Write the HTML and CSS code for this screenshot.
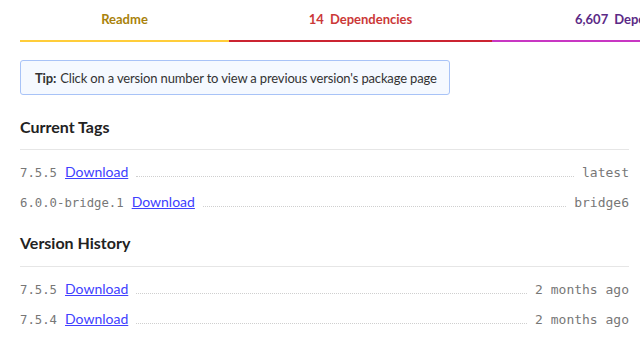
FILE: index.html
```html
<!DOCTYPE html>
<html>
<head>
<meta charset="utf-8">
<link rel="stylesheet" href="styles.css">
</head>
<body>
<div class="page">
  <nav class="tabs">
    <div class="tab tab-readme">Readme</div>
    <div class="tab tab-deps"><span class="num">14</span>Dependencies</div>
    <div class="tab tab-dependents"><span class="num">6,607</span>Dependents</div>
  </nav>
  <div class="tip"><strong>Tip:</strong> Click on a version number to view a previous version's package page</div>

  <h3 class="heading heading-first">Current Tags</h3>
  <ul class="list">
    <li class="row"><span class="ver">7.5.5</span><a class="dl" href="#">Download</a><span class="leader"></span><span class="tag">latest</span></li>
    <li class="row"><span class="ver">6.0.0-bridge.1</span><a class="dl" href="#">Download</a><span class="leader"></span><span class="tag">bridge6</span></li>
  </ul>

  <h3 class="heading heading-second">Version History</h3>
  <ul class="list">
    <li class="row"><span class="ver">7.5.5</span><a class="dl" href="#">Download</a><span class="leader"></span><span class="tag">2 months ago</span></li>
    <li class="row"><span class="ver">7.5.4</span><a class="dl" href="#">Download</a><span class="leader"></span><span class="tag">2 months ago</span></li>
  </ul>
</div>
</body>
</html>
```
FILE: styles.css
```css
html, body {
  margin: 0;
  padding: 0;
  overflow: hidden;
  background: #fff;
}
body {
  font-family: Lato, "Liberation Sans", sans-serif;
  color: #333;
}
.page {
  padding-left: 20px;
  width: 609px;
}
.tabs {
  display: flex;
  width: 800px;
  height: 40px;
}
.tab {
  flex: none;
  display: flex;
  align-items: center;
  justify-content: center;
  font-size: 13px;
  font-weight: 700;
  border-bottom: 2px solid;
  padding-bottom: 2px;
  box-sizing: content-box;
  height: 38px;
}
.tab .num { margin-right: 6px; }
.tab-readme { width: 209px; color: #a9820a; border-color: #ffcd3a; }
.tab-deps { width: 263px; color: #cb3837; border-color: #cb2431; }
.tab-dependents { color: #5b2a86; border-color: #c836c3; justify-content: flex-start; padding-left: 83px; width: 200px; }

.tip {
  margin-top: 20px;
  width: 430px;
  box-sizing: border-box;
  height: 35px;
  display: flex;
  align-items: center;
  padding-left: 14px;
  background: #f5f9ff;
  border: 1px solid #a8c3f7;
  border-radius: 3px;
  font-size: 13px;
  letter-spacing: -0.15px;
  color: #333;
  white-space: nowrap;
}
.tip strong { margin-right: 4px; }

.heading {
  margin: 0;
  font-size: 16px;
  line-height: 20px;
  font-weight: 700;
  color: #222;
  padding-top: 16px;
  padding-bottom: 12px;
  border-bottom: 1px solid #e6e6e6;
}
.heading-first { padding-top: 22px; }
.heading-second { padding-bottom: 13px; }
.list {
  list-style: none;
  margin: 0;
  padding: 7px 0 0;
}
.row {
  display: flex;
  align-items: baseline;
  height: 30px;
  line-height: 30px;
}
.ver {
  font-family: "DejaVu Sans Mono", monospace;
  font-size: 12.3px;
  color: #777;
  margin-right: 8px;
}
.dl {
  font-size: 14px;
  color: #4040ff;
  text-decoration: underline;
}
.leader {
  flex: 1;
  border-bottom: 1px dotted #cfcfcf;
  margin: 0 8px;
  align-self: baseline;
}
.tag {
  font-family: "DejaVu Sans Mono", monospace;
  font-size: 13px;
  color: #777;
}
```
